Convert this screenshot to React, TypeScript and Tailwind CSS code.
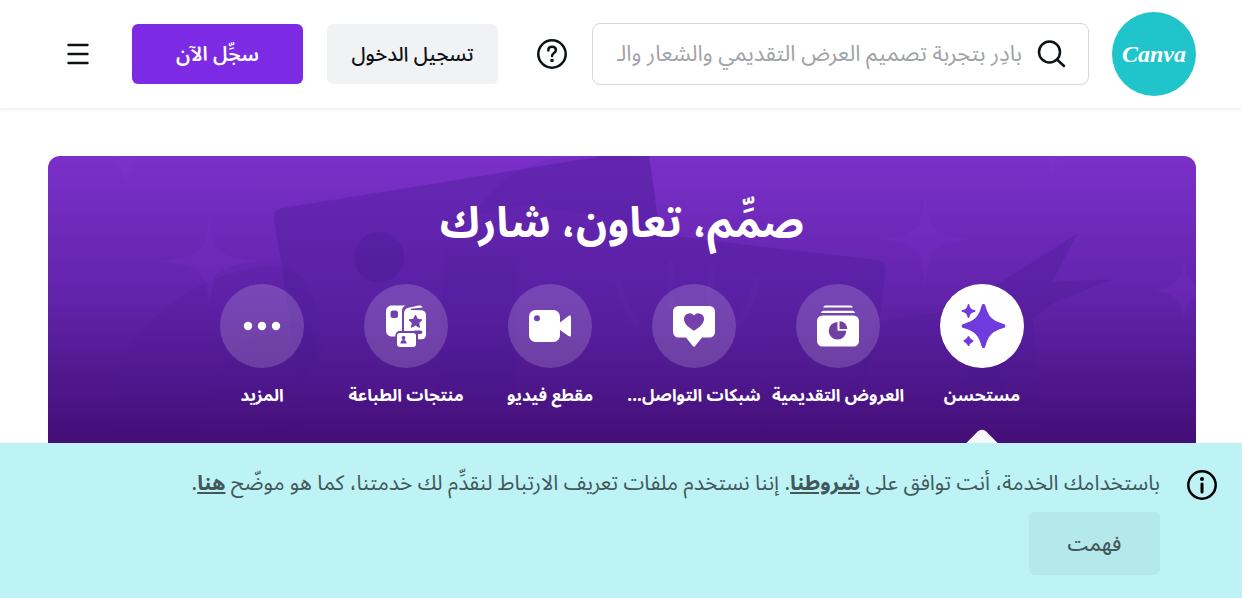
import React from "react"

interface Category {
  id: string,
  label: string,
  icon: React.ReactNode,
  active?: boolean
}

const SparkleIcon = () => (
  <svg viewBox="0 0 48 48" className="size-12" fill="#6f3bdc" aria-hidden="true">
    <path d="M25.500 2c1 0 1.500.6 1.800 1.600C30.500 15 34 18.500 45.500 22c1.100.4 1.900 1 1.900 2s-.8 1.600-1.900 2c-11.500 3.500-15 7-18.200 18.400-.3 1-.8 1.600-1.800 1.600s-1.500-.6-1.800-1.600C20.500 33 17 29.500 5.500 26c-1.100-.4-1.900-1-1.900-2s.8-1.600 1.900-2C17 18.500 20.500 15 23.700 3.600 24 2.600 24.500 2 25.500 2z" />
    <path d="M10.500 2c.5 0 .7.300.9.900 1 3.600 1.700 4.300 5.200 5.200.6.200.9.400.9.900s-.3.700-.9.900c-3.500.9-4.200 1.600-5.200 5.200-.2.600-.4.900-.9.900s-.7-.3-.9-.9c-1-3.600-1.700-4.300-5.200-5.200-.6-.2-.9-.4-.9-.9s.3-.7.900-.9c3.500-.9 4.200-1.600 5.200-5.200.2-.6.400-.9.900-.9z" />
    <path d="M10.500 34c.4 0 .6.200.8.600 1 2 1.300 2.200 3.500 3.500.4.200.7.500.7.900s-.3.700-.7.900c-2.200 1.300-2.500 1.500-3.500 3.500-.2.400-.4.600-.8.600s-.6-.2-.8-.6c-1-2-1.300-2.200-3.500-3.500-.4-.2-.7-.5-.7-.9s.3-.7.700-.9c2.200-1.300 2.500-1.500 3.500-3.500.2-.4.400-.6.800-.6z" />
  </svg>
)

const PresentationIcon = () => (
  <svg viewBox="0 0 48 48" className="size-12" aria-hidden="true">
    <path d="M11.500 3.500h25c1.200 0 2 .9 2.300 2h-29.600c.3-1.100 1.100-2 2.300-2z" fill="#fff" />
    <path d="M9.500 8.700h29c1.400 0 2.300 1 2.500 2.300h-34c.2-1.300 1.100-2.300 2.500-2.300z" fill="#fff" />
    <rect x="3" y="13.500" width="42" height="31" rx="5.500" fill="#fff" />
    <path d="M23.500 20v8.800h8.800A8.800 8.800 0 1 1 23.500 20z" fill="#70409f" />
    <path d="M25.500 19.200a7.800 7.800 0 0 1 7.800 7.800h-7.800z" fill="#70409f" />
  </svg>
)

const SocialIcon = () => (
  <svg viewBox="0 0 48 48" className="size-12" aria-hidden="true">
    <path d="M8.500 4h31A5.500 5.500 0 0 1 45 9.500V30a5.500 5.500 0 0 1-5.500 5.500H32l-6.800 8.600c-.7.900-1.700.9-2.400 0L16 35.500H8.500A5.500 5.500 0 0 1 3 30V9.500A5.500 5.500 0 0 1 8.500 4z" fill="#fff" />
    <path d="M24 28.800C17.500 24.800 14 21.200 14 17a5.600 5.600 0 0 1 10-3.500A5.600 5.600 0 0 1 34 17c0 4.200-3.500 7.800-10 11.800z" fill="#7440ab" />
  </svg>
)

const VideoIcon = () => (
  <svg viewBox="0 0 48 48" className="size-12" aria-hidden="true">
    <rect x="3" y="8" width="31" height="32" rx="6.500" fill="#fff" />
    <path d="M34 20.500l8.500-6.600c1.300-.9 2.500-.4 2.500 1.100v18c0 1.500-1.200 2-2.500 1.100L34 28z" fill="#fff" />
    <circle cx="11" cy="16.300" r="3" fill="#7440ab" />
  </svg>
)

const PrintIcon = () => (
  <svg viewBox="0 0 48 48" className="size-12" aria-hidden="true">
    <path d="M10 3.500h13.500c-2.300 1-3.500 2.700-3.500 5.300V29h-2.500c-2.400 0-3.800 1.300-4.200 5.500H10c-3.600 0-6-2.400-6-6v-19c0-3.600 2.400-6 6-6z" fill="#fff" />
    <rect x="8.500" y="8.500" width="7.500" height="7.500" rx="2.500" fill="#7440ab" />
    <path d="M22 29V11.500c0-3 1.500-5 4.500-5.700l10-2.200c2-.4 3.500.2 4.300 1.900L29 6.700v1.200l10.500.4c3 .2 4.500 2.200 4.500 5v19c0 3.200-1.900 5-4.500 5H36v-4c0-1.500-.6-3-1.500-4.300z" fill="#fff" />
    <path d="M33.500 13.300l2 3.900 4.400.7-3.200 3 .8 4.400-4-2.100-4 2.100.8-4.400-3.200-3 4.400-.7z" fill="#7440ab" stroke="#7440ab" strokeLinejoin="round" />
    <path d="M32 28.500h6.500a1.500 1.500 0 0 1 0 3.500H35z" fill="#7440ab" />
    <rect x="15" y="31" width="19" height="14" rx="3" fill="#fff" />
    <circle cx="21.500" cy="36" r="1.900" fill="#7440ab" />
    <path d="M18.500 41.500c0-2 1-3.500 3-3.500s3 1.500 3 3.500z" fill="#7440ab" />
  </svg>
)

const MoreIcon = () => (
  <svg viewBox="0 0 48 48" className="size-12" fill="#fff" aria-hidden="true">
    <circle cx="10" cy="24" r="4.200" />
    <circle cx="24" cy="24" r="4.200" />
    <circle cx="38" cy="24" r="4.200" />
  </svg>
)

const categories: Category[] = [
  { id: "foryou", label: "مستحسن", icon: <SparkleIcon />, active: true },
  { id: "presentations", label: "العروض التقديمية", icon: <PresentationIcon /> },
  { id: "social", label: "شبكات التواصل...", icon: <SocialIcon /> },
  { id: "video", label: "مقطع فيديو", icon: <VideoIcon /> },
  { id: "print", label: "منتجات الطباعة", icon: <PrintIcon /> },
  { id: "more", label: "المزيد", icon: <MoreIcon /> },
]

// faint cards, leaves and stars behind the hero content
const HeroArt = () => (
  <svg viewBox="0 0 1148 287" preserveAspectRatio="xMidYMin slice" className="absolute inset-0 size-full" aria-hidden="true">
    <defs>
      <linearGradient id="fade" x1="0" y1="0" x2="0" y2="287" gradientUnits="userSpaceOnUse">
        <stop offset="0" stopColor="#3c1488" stopOpacity=".3" />
        <stop offset=".4" stopColor="#3c1488" stopOpacity=".24" />
        <stop offset="1" stopColor="#3c1488" stopOpacity="0" />
      </linearGradient>
    </defs>
    <g fill="url(#fade)">
      <path d="M234 52L556 0h45l11 78 218 26q8 2 7 10l-7 54-30 119H260l-25-177-8-48q0-8 7-10z" />
      <path d="M70 220q10-50 85-92 70-30 96-10 30 30 22 90-20 50-40 79H65z" fillOpacity=".6" />
      <path d="M150 287q10-80 65-115 40-18 55 10 0 40-40 65-15 20-20 40z" fillOpacity=".8" />
      <path d="M830 165l62-10 48-22 88-56-25 48 60-2-60 24-20 15 15 125H780z" />
      <path d="M910 230l36-60 15 117h-55z" />
    </g>
    <path d="M505 2L556 0h45l11 78q-60-24-142-28l-45 10q30-46 80-58z" fill="#3c1488" fillOpacity=".1" />
    <path d="M397 92h75l-6 150h-75z" fill="#3c1488" fillOpacity=".08" />
    <circle cx="332" cy="101" r="25" fill="#3c1488" fillOpacity=".22" />
    <g fill="#8a38d8" fillOpacity=".16">
      <path d="M163 56q2 27 8 36t42 13q-36 4-42 12t-8 39q-2-31-8-39t-42-12q36-4 42-13t8-36z" />
      <path d="M876 38q2 23 8 32t36 13q-30 4-36 12t-8 39q-2-31-8-39t-36-12q30-4 36-13t8-32z" />
      <path d="M60 0h38q-16 4-19 36-3-32-19-36z" />
      <path d="M993 0h20q-8 4-10 28-2-24-10-28z" />
      <path d="M1134 104q2 27 30 30-28 2-30 28-2-26-30-28 28-3 30-30z" />
    </g>
    <g fill="none" stroke="#7f3acb" strokeOpacity=".08" strokeWidth="7" strokeLinecap="round">
      <path d="M570 124q6 26 18 44M623 108v40M664 112l-4 38M708 124q-4 24-18 42" />
    </g>
  </svg>
)

export default function App() {
  return (
    <div dir="rtl" lang="ar" className="min-h-screen bg-white pb-40 text-[#0d1216] font-['Noto_Sans_Arabic','Noto_Sans','DejaVu_Sans',sans-serif]">
      <header className="flex h-27 items-center bg-white pr-[46px] pl-16 shadow-[0_1px_4px_rgba(0,0,0,0.08)]">
        <a href="#" dir="ltr" className="flex size-21 shrink-0 items-center justify-center rounded-full bg-[#20c4cb] text-[24px] font-bold italic text-white font-['Liberation_Serif',serif]">
          Canva
        </a>
        <div className="mr-[23px] flex h-[62px] min-w-0 flex-1 items-center rounded-lg border border-[#d5d7dc] pr-[22px] pl-6">
          <svg viewBox="0 0 30 30" className="size-[30px] shrink-0" fill="none" stroke="currentColor" strokeWidth="2.500" strokeLinecap="round" aria-hidden="true">
            <circle cx="13.500" cy="13" r="10.500" />
            <path d="M21.500 21l6.500 6" />
          </svg>
          <input
            type="text"
            aria-label="بحث"
            placeholder="بادِر بتجربة تصميم العرض التقديمي والشعار والـ"
            className="mr-3.5 h-full w-full min-w-0 bg-transparent text-[22px] outline-none placeholder:text-[#a0a3a8]"
          />
        </div>
        <button type="button" aria-label="مساعدة" className="mr-6 shrink-0">
          <svg viewBox="0 0 32 32" className="size-8" fill="none" stroke="currentColor" strokeWidth="2.500" strokeLinecap="round" aria-hidden="true">
            <circle cx="16" cy="16" r="13.700" />
            <path d="M12.300 12.500c0-2.300 1.600-3.700 3.800-3.700s3.800 1.400 3.800 3.400c0 2.700-3.900 2.900-3.900 5.800" />
            <circle cx="16" cy="22.500" r="1.800" fill="currentColor" stroke="none" />
          </svg>
        </button>
        <button type="button" className="mr-[38px] h-15 w-[171px] shrink-0 rounded-md bg-[#f1f2f4] pt-0.5 text-[20px] font-medium">
          تسجيل الدخول
        </button>
        <button type="button" className="mr-6 h-15 w-[171px] shrink-0 rounded-md bg-[#7d2ae4] pt-0.5 text-[20px] font-semibold text-white">
          سجِّل الآن
        </button>
        <button type="button" aria-label="القائمة" className="mr-10 shrink-0">
          <svg viewBox="0 0 28 28" className="size-7" fill="none" stroke="currentColor" strokeWidth="2.400" strokeLinecap="round" aria-hidden="true">
            <path d="M4.500 5h19M4.500 14h19M4.500 23h19" />
          </svg>
        </button>
      </header>

      <main className="mt-12 mr-[46px] ml-12">
        <section className="relative overflow-hidden rounded-t-xl bg-linear-to-b from-[#7b30c9] via-[#6123aa] to-[#430e76]">
          <HeroArt />
          <div className="relative flex flex-col items-center pt-9">
            <h1 className="h-16 text-[43px] leading-16 font-bold text-white">صمِّم، تعاون، شارك</h1>
            <nav className="mt-7 flex">
              {categories.map((category) => (
                <a key={category.id} href="#" className="relative flex h-40 w-36 flex-col items-center">
                  <span className={`flex size-21 items-center justify-center rounded-full ${category.active ? "bg-white" : "bg-white/17"}`}>
                    {category.icon}
                  </span>
                  <span className="mt-3 text-[17px] leading-8 font-bold whitespace-nowrap text-white">{category.label}</span>
                  {category.active && (
                    <span className="absolute -bottom-[22px] size-8 rotate-45 rounded-md bg-[#f8f9fa]" />
                  )}
                </a>
              ))}
            </nav>
          </div>
        </section>
      </main>

      <footer className="fixed inset-x-0 bottom-0 flex items-start bg-[#bdf3f4] pt-6 pr-6 pb-[23px]">
        <svg viewBox="0 0 32 32" className="mt-0.5 size-8 shrink-0" fill="none" stroke="#000" strokeWidth="2.500" strokeLinecap="round" aria-hidden="true">
          <circle cx="16" cy="16" r="13.700" />
          <path d="M16 15v8" strokeWidth="3" />
          <circle cx="16" cy="10" r="2" fill="#000" stroke="none" />
        </svg>
        <div className="mr-[26px] text-[21px] text-[#42585b]">
          <p className="leading-8">
            باستخدامك الخدمة، أنت توافق على <a href="#" className="font-bold underline">شروطنا</a>. إننا نستخدم ملفات تعريف الارتباط لنقدِّم لك خدمتنا، كما هو موضّح <a href="#" className="font-bold underline">هنا</a>.
          </p>
          <button type="button" className="mt-[13px] h-[63px] w-[131px] rounded-md bg-[#b4e8ea] pt-0.5 text-[20px] font-medium">
            فهمت
          </button>
        </div>
      </footer>
    </div>
  )
}
